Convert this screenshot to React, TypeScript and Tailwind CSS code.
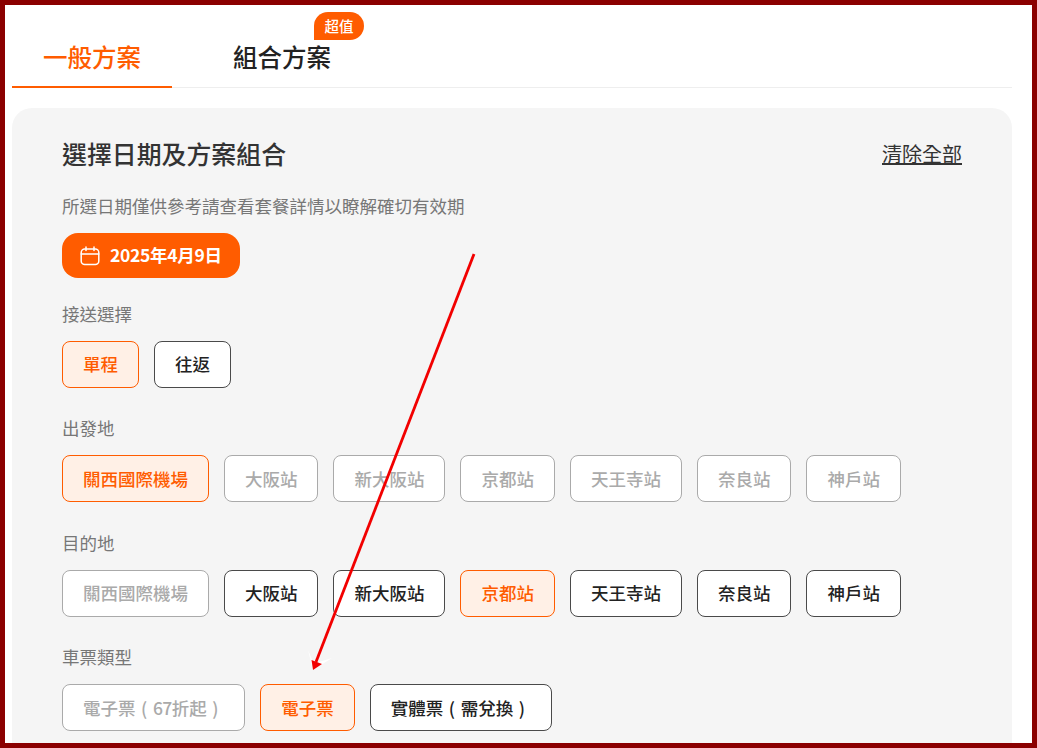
import React from 'react';

type OptionState = 'active' | 'normal' | 'disabled';

interface Option {
  label: React.ReactNode;
  state: OptionState;
}

const stateClass: Record<OptionState, string> = {
  active: 'border-[#ff5c00] bg-[#fff0e6] text-[#ff5c00]',
  normal: 'border-[#4a4a4a] bg-white text-[#222222]',
  disabled: 'border-[#aaaaaa] bg-white text-[#aaaaaa]',
};

const stations = ['大阪站', '新大阪站', '京都站', '天王寺站', '奈良站', '神戶站'];

// Parens sit centered in a full-width cell in the original font
const Paren = ({ children }: { children: string }) => (
  <span className="inline-block w-[1em] text-center">{children}</span>
);

const groups: { title: string; options: Option[] }[] = [
  {
    title: '接送選擇',
    options: [
      { label: '單程', state: 'active' },
      { label: '往返', state: 'normal' },
    ],
  },
  {
    title: '出發地',
    options: [
      { label: '關西國際機場', state: 'active' },
      ...stations.map((label) => ({ label, state: 'disabled' as OptionState })),
    ],
  },
  {
    title: '目的地',
    options: [
      { label: '關西國際機場', state: 'disabled' },
      ...stations.map((label) => ({
        label,
        state: (label === '京都站' ? 'active' : 'normal') as OptionState,
      })),
    ],
  },
  {
    title: '車票類型',
    options: [
      {
        label: (
          <>
            電子票<Paren>(</Paren>
            <span className="tracking-[-0.6px]">67</span>折起<Paren>)</Paren>
          </>
        ),
        state: 'disabled',
      },
      { label: '電子票', state: 'active' },
      {
        label: (
          <>
            實體票<Paren>(</Paren>需兌換<Paren>)</Paren>
          </>
        ),
        state: 'normal',
      },
    ],
  },
];

const CalendarIcon = () => (
  <svg width="20" height="20" viewBox="0 0 20 20" fill="none" stroke="white" strokeWidth="1.5" strokeLinecap="round">
    <rect x="1.2" y="3" width="17.6" height="15.6" rx="3.5" />
    <path d="M1.2 8h17.6M6 1v3.5M14 1v3.5" />
  </svg>
);

const App: React.FC = () => {
  return (
    <div className="relative h-[748px] w-[1037px] overflow-hidden border-[5px] border-[#8b0000] bg-white font-['Noto_Sans_CJK_TC','Noto_Sans',sans-serif]">
      {/* Tabs */}
      <div className="ml-[7px] mr-[20px] flex h-[83px] border-b border-[#eeeeee]">
        <div className="flex h-[83px] w-[160px] items-center justify-center border-b-2 border-[#ff5c00] pt-[23px] text-[24.5px] font-medium text-[#ff5c00]">
          一般方案
        </div>
        <div className="relative flex h-[82px] w-[220px] items-center justify-center pt-[23px] text-[24.5px] font-medium text-[#222222]">
          組合方案
          <span className="absolute left-[142px] top-[7px] flex h-[28px] w-[50px] items-center justify-center rounded-t-[14px] rounded-br-[14px] bg-[#ff5c00] text-[14.5px] font-medium text-white">
            超值
          </span>
        </div>
      </div>

      {/* Selection card */}
      <div className="ml-[7px] mr-[20px] mt-[20px] h-[700px] rounded-[20px] bg-[#f5f5f5] px-[50px] pt-[26px]">
        <div className="flex h-[40px] items-center justify-between">
          <h2 className="text-[24.9px] font-medium text-[#333333]">選擇日期及方案組合</h2>
          <a className="text-[20px] text-[#333333] underline">清除全部</a>
        </div>
        <p className="mt-[18px] h-[28px] text-[17.5px] leading-[28px] text-[#777777]">
          所選日期僅供參考請查看套餐詳情以瞭解確切有效期
        </p>
        <div className="mt-[13px] flex h-[45px] w-[178px] items-center gap-[10px] rounded-[16px] bg-[#ff5c00] pl-[18px] text-[17.5px] font-bold tracking-[-0.3px] text-white">
          <CalendarIcon />
          2025年4月9日
        </div>

        <div className="mt-[23px] flex flex-col gap-[27.4px]">
          {groups.map((group) => (
            <section key={group.title}>
              <h3 className="h-[26px] text-[17.5px] leading-[26px] text-[#777777]">{group.title}</h3>
              <div className="ml-[-0.1px] mt-[14px] flex gap-[15px]">
                {group.options.map((option, index) => (
                  <button
                    key={index}
                    className={`flex h-[47px] items-center rounded-[8px] border px-[20px] text-[17.5px] font-medium ${stateClass[option.state]}`}
                  >
                    {option.label}
                  </button>
                ))}
              </div>
            </section>
          ))}
        </div>
      </div>

      {/* Annotation arrow */}
      <svg className="absolute left-[-5px] top-[-5px]" width="1037" height="748" fill="none">
        <path d="M308 650L313 670L332 658L319 662L314 664z" fill="white" />
        <path d="M474 254L316 662" stroke="#f20000" strokeWidth="2.8" />
        <path d="M313 670L311.500 660L322 664z" fill="#f20000" />
      </svg>
    </div>
  );
};

export default App;
